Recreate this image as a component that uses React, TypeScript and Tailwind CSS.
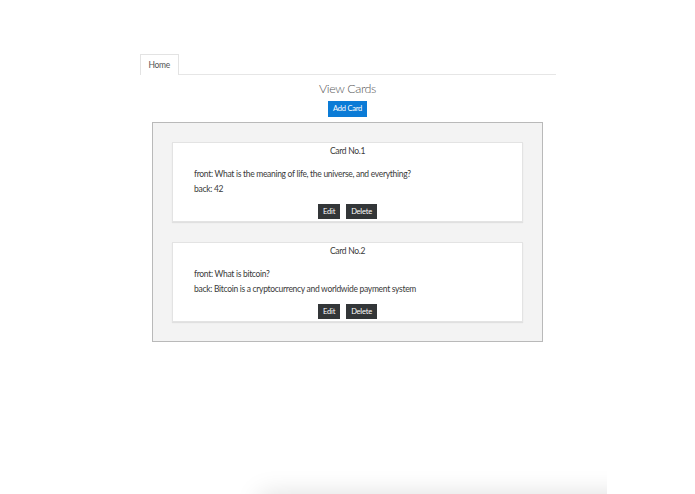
import React from 'react';

const cards = [
    { id: 1, front: 'What is the meaning of life, the universe, and everything?', back: '42' },
    { id: 2, front: 'What is bitcoin?', back: 'Bitcoin is a cryptocurrency and worldwide payment system' },
];

export default function App() {
    return (
        <div className="relative w-[695px] h-[494px] overflow-hidden bg-white text-[#3a3a3a] font-['Lato',sans-serif]">
            <div className="w-[416px] mx-auto pt-[54px]">
                {/* tabs */}
                <div className="flex border-b border-[#e6e6e6]">
                    <div className="h-[21px] px-[8px] border border-b-0 border-[#e3e3e3] bg-white text-[8.5px] tracking-[-0.3px] leading-[20px] text-[#555] -mb-px">
                        Home
                    </div>
                </div>

                <h2 className="mt-[5px] text-center text-[12.5px] tracking-[-0.4px] leading-[17px] font-light text-[#555]">View Cards</h2>
                <div className="flex justify-center mt-[4px]">
                    <button className="h-[16px] px-[5px] bg-[#0b7bd6] text-white text-[7.5px] tracking-[-0.2px] leading-[16px]">Add Card</button>
                </div>

                <div className="w-[391px] mx-auto mt-[5px] border border-[#b9b9b9] bg-[#f3f3f3] p-[19px] flex flex-col gap-[20px]">
                    {cards.map(c => (
                        <div key={c.id} className="bg-white border border-[#e3e3e3] shadow-[0_1px_1px_rgba(0,0,0,0.08)] h-[80px] px-[21px] text-[8.5px] tracking-[-0.3px]">
                            <p className="text-center leading-[17px]">Card No.{c.id}</p>
                            <p className="mt-[7px] leading-[15px]">front: {c.front}</p>
                            <p className="leading-[15px]">back: {c.back}</p>
                            <div className="flex justify-center gap-[6px] mt-[7px] tracking-[-0.2px]">
                                <button className="h-[15px] px-[5px] bg-[#333638] text-white text-[7.5px] leading-[15px]">Edit</button>
                                <button className="h-[15px] px-[5px] bg-[#333638] text-white text-[7.5px] leading-[15px]">Delete</button>
                            </div>
                        </div>
                    ))}
                </div>
            </div>

            {/* faint shadow at the bottom edge */}
            <div className="absolute left-[200px] top-[456px] w-[407px] h-[38px] overflow-hidden">
                <div className="ml-[60px] mt-[38px] w-[420px] h-[40px] bg-white shadow-[0_0_26px_rgba(0,0,0,0.13)]"></div>
            </div>
        </div>
    );
}
